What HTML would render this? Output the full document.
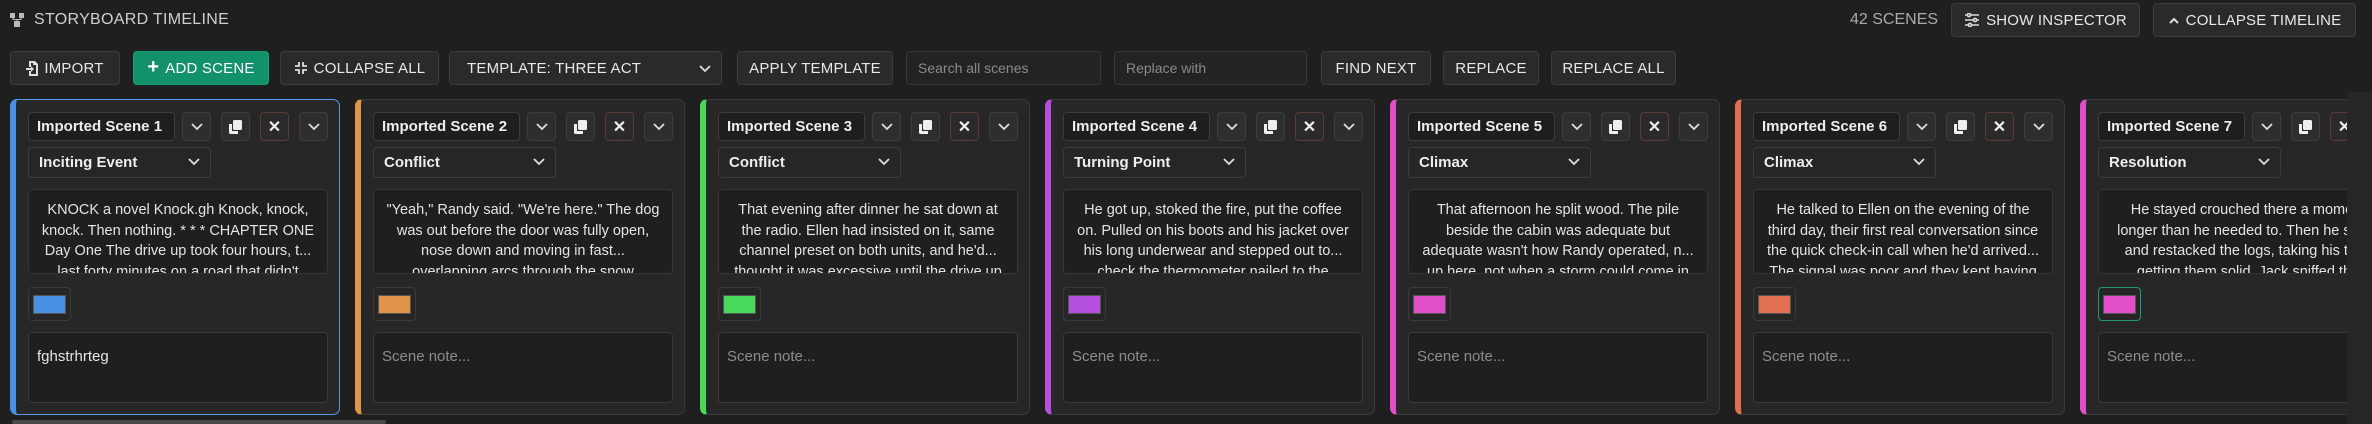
<!DOCTYPE html>
<html><head><meta charset="utf-8"><style>
*{box-sizing:border-box;margin:0;padding:0}
body{width:2372px;height:424px;overflow:hidden;background:#1f1f1f;font-family:"Liberation Sans",sans-serif;color:#e6e6e6;position:relative}
.abs{position:absolute}
.btn{position:absolute;top:51px;height:34px;background:#2a2a2a;border:1px solid #3c3c3c;border-radius:4px;color:#e8e8e8;font-size:15px;display:flex;align-items:center;justify-content:center;gap:6px;letter-spacing:.2px}
.inp{position:absolute;top:51px;height:34px;background:#232323;border:1px solid #383838;border-radius:4px;color:#8a8a8a;font-size:14px;padding-left:11px;display:flex;align-items:center}
.card{position:absolute;top:99px;width:330px;height:316px;background:#272727;border:1px solid #3a3a3a;border-radius:7px;border-left-width:6px;overflow:hidden}
.card > *{position:absolute}
.nm{left:12px;top:12px;width:147px;height:29px;background:#1e1e1e;border:1px solid #3c3c3c;border-radius:4px;font-size:15px;font-weight:bold;padding-left:8px;line-height:27px;color:#eee}
.ib{top:12px;width:29px;height:29px;background:#2e2e2e;border:1px solid #3d3d3d;border-radius:4px;display:flex;align-items:center;justify-content:center}
.ib.x{border-color:#5e3a36;background:#2a2a2a}
.ty{left:12px;top:47px;width:183px;height:31px;background:#262626;border:1px solid #3c3c3c;border-radius:4px;font-size:15px;font-weight:bold;padding-left:10px;line-height:29px;color:#eee}
.ty svg{position:absolute;right:10px;top:10px}
.tx{left:12px;top:89px;width:300px;height:85px;background:#1f1f1f;border:1px solid #363636;border-radius:4px;overflow:hidden;font-size:14.5px;line-height:20.5px;text-align:center;padding-top:10px;color:#e4e4e4}
.tx div{white-space:nowrap}
.sw{left:12px;top:187px;width:43px;height:34px;border:1px solid #3a3a3a;border-radius:4px;background:#262626}
.sw i{position:absolute;left:4px;top:7px;width:33px;height:19px;border:1px solid #555}
.nt{left:12px;top:232px;width:300px;height:71px;background:#1f1f1f;border:1px solid #3a3a3a;border-radius:4px;font-size:15px;padding:15px 0 0 8px;color:#8c8c8c}
</style></head><body>
<svg class="abs" style="left:9px;top:12px" width="16" height="16" viewBox="0 0 16 16" fill="#bbb"><rect x="1" y="1" width="5" height="5"/><rect x="10" y="1" width="5" height="5"/><rect x="5" y="9" width="6" height="6"/><path d="M3.5 6v2h9V6h-1v1h-7V6z"/><rect x="7.5" y="7" width="1" height="2"/></svg>
<div class="abs" style="left:34px;top:11px;font-size:16px;color:#cfcfcf;letter-spacing:.3px">STORYBOARD TIMELINE</div>
<div class="abs" style="left:1850px;top:11px;font-size:16px;color:#aaa">42 SCENES</div>
<div class="btn" style="top:3px;left:1951px;width:189px"><svg width="16" height="14" viewBox="0 0 16 14" stroke="#ddd" stroke-width="1.6" fill="none"><path d="M1 2h14M1 7h14M1 12h14"/><circle cx="5" cy="2" r="1.6" fill="#2a2a2a"/><circle cx="11" cy="7" r="1.6" fill="#2a2a2a"/><circle cx="6" cy="12" r="1.6" fill="#2a2a2a"/></svg>SHOW INSPECTOR</div>
<div class="btn" style="top:3px;left:2153px;width:203px"><svg width="12" height="8" viewBox="0 0 12 8" stroke="#ddd" stroke-width="2" fill="none"><path d="M2 7l4-4 4 4"/></svg>COLLAPSE TIMELINE</div>

<div class="btn" style="left:10px;width:110px"><svg width="12" height="15" viewBox="0 0 12 15" fill="#ddd"><path d="M3 0h6l3 3v12H3v-5h2v3h5V4H7V2H5v4H3z"/><path d="M0 7h5V5l3 3-3 3V9H0z"/></svg>IMPORT</div>
<div class="btn" style="left:133px;width:136px;background:#12916b;border-color:#1aa37a;color:#fff"><span style="font-size:20px;font-weight:bold;margin-top:-2px">+</span>ADD SCENE</div>
<div class="btn" style="left:280px;width:159px"><svg width="14" height="14" viewBox="0 0 14 14" stroke="#ddd" stroke-width="1.8" fill="none"><path d="M5 1v4H1M9 1v4h4M5 13V9H1M9 13V9h4"/></svg>COLLAPSE ALL</div>
<div class="btn" style="left:449px;width:273px;justify-content:flex-start;padding-left:17px">TEMPLATE: THREE ACT<svg style="position:absolute;right:10px;top:13px" width="12" height="8" viewBox="0 0 12 8" stroke="#ddd" stroke-width="1.8" fill="none"><path d="M1 1l5 5 5-5"/></svg></div>
<div class="btn" style="left:737px;width:156px">APPLY TEMPLATE</div>
<div class="inp" style="left:906px;width:195px">Search all scenes</div>
<div class="inp" style="left:1114px;width:193px">Replace with</div>
<div class="btn" style="left:1321px;width:110px">FIND NEXT</div>
<div class="btn" style="left:1443px;width:96px">REPLACE</div>
<div class="btn" style="left:1551px;width:125px">REPLACE ALL</div>

<div class="card" style="left:10px;border-color:#5a9be6;border-left-color:#4a90e2">
<div class="nm">Imported Scene 1</div>
<div class="ib" style="left:166px"><svg width="12" height="8" viewBox="0 0 12 8" stroke="#ddd" stroke-width="1.8" fill="none"><path d="M1 1l5 5 5-5"/></svg></div>
<div class="ib" style="left:205px"><svg width="13" height="14" viewBox="0 0 13 14" fill="#eee"><rect x="4" y="0" width="9" height="10" rx="1.5"/><path d="M0 4h3v7h6v3H1.5A1.5 1.5 0 0 1 0 12.5z"/></svg></div>
<div class="ib x" style="left:244px;color:#eee;font-size:16px;font-weight:bold">✕</div>
<div class="ib" style="left:283px"><svg width="12" height="8" viewBox="0 0 12 8" stroke="#ddd" stroke-width="1.8" fill="none"><path d="M1 1l5 5 5-5"/></svg></div>
<div class="ty">Inciting Event<svg width="12" height="8" viewBox="0 0 12 8" stroke="#ddd" stroke-width="1.8" fill="none"><path d="M1 1l5 5 5-5"/></svg></div>
<div class="tx"><div>KNOCK a novel Knock.gh Knock, knock,</div><div>knock. Then nothing. * * * CHAPTER ONE</div><div>Day One The drive up took four hours, t...</div><div>last forty minutes on a road that didn't</div></div>
<div class="sw"><i style="background:#4a90e2"></i></div>
<div class="nt" style="color:#e6e6e6">fghstrhrteg</div>
</div>

<div class="card" style="left:355px;border-left-color:#e0954a">
<div class="nm">Imported Scene 2</div>
<div class="ib" style="left:166px"><svg width="12" height="8" viewBox="0 0 12 8" stroke="#ddd" stroke-width="1.8" fill="none"><path d="M1 1l5 5 5-5"/></svg></div>
<div class="ib" style="left:205px"><svg width="13" height="14" viewBox="0 0 13 14" fill="#eee"><rect x="4" y="0" width="9" height="10" rx="1.5"/><path d="M0 4h3v7h6v3H1.5A1.5 1.5 0 0 1 0 12.5z"/></svg></div>
<div class="ib x" style="left:244px;color:#eee;font-size:16px;font-weight:bold">✕</div>
<div class="ib" style="left:283px"><svg width="12" height="8" viewBox="0 0 12 8" stroke="#ddd" stroke-width="1.8" fill="none"><path d="M1 1l5 5 5-5"/></svg></div>
<div class="ty">Conflict<svg width="12" height="8" viewBox="0 0 12 8" stroke="#ddd" stroke-width="1.8" fill="none"><path d="M1 1l5 5 5-5"/></svg></div>
<div class="tx"><div>"Yeah," Randy said. "We're here." The dog</div><div>was out before the door was fully open,</div><div>nose down and moving in fast...</div><div>overlapping arcs through the snow</div></div>
<div class="sw"><i style="background:#e0954a"></i></div>
<div class="nt">Scene note...</div>
</div>

<div class="card" style="left:700px;border-left-color:#47d95a">
<div class="nm">Imported Scene 3</div>
<div class="ib" style="left:166px"><svg width="12" height="8" viewBox="0 0 12 8" stroke="#ddd" stroke-width="1.8" fill="none"><path d="M1 1l5 5 5-5"/></svg></div>
<div class="ib" style="left:205px"><svg width="13" height="14" viewBox="0 0 13 14" fill="#eee"><rect x="4" y="0" width="9" height="10" rx="1.5"/><path d="M0 4h3v7h6v3H1.5A1.5 1.5 0 0 1 0 12.5z"/></svg></div>
<div class="ib x" style="left:244px;color:#eee;font-size:16px;font-weight:bold">✕</div>
<div class="ib" style="left:283px"><svg width="12" height="8" viewBox="0 0 12 8" stroke="#ddd" stroke-width="1.8" fill="none"><path d="M1 1l5 5 5-5"/></svg></div>
<div class="ty">Conflict<svg width="12" height="8" viewBox="0 0 12 8" stroke="#ddd" stroke-width="1.8" fill="none"><path d="M1 1l5 5 5-5"/></svg></div>
<div class="tx"><div>That evening after dinner he sat down at</div><div>the radio. Ellen had insisted on it, same</div><div>channel preset on both units, and he'd...</div><div>thought it was excessive until the drive up</div></div>
<div class="sw"><i style="background:#47d95a"></i></div>
<div class="nt">Scene note...</div>
</div>

<div class="card" style="left:1045px;border-left-color:#b44fe0">
<div class="nm">Imported Scene 4</div>
<div class="ib" style="left:166px"><svg width="12" height="8" viewBox="0 0 12 8" stroke="#ddd" stroke-width="1.8" fill="none"><path d="M1 1l5 5 5-5"/></svg></div>
<div class="ib" style="left:205px"><svg width="13" height="14" viewBox="0 0 13 14" fill="#eee"><rect x="4" y="0" width="9" height="10" rx="1.5"/><path d="M0 4h3v7h6v3H1.5A1.5 1.5 0 0 1 0 12.5z"/></svg></div>
<div class="ib x" style="left:244px;color:#eee;font-size:16px;font-weight:bold">✕</div>
<div class="ib" style="left:283px"><svg width="12" height="8" viewBox="0 0 12 8" stroke="#ddd" stroke-width="1.8" fill="none"><path d="M1 1l5 5 5-5"/></svg></div>
<div class="ty">Turning Point<svg width="12" height="8" viewBox="0 0 12 8" stroke="#ddd" stroke-width="1.8" fill="none"><path d="M1 1l5 5 5-5"/></svg></div>
<div class="tx"><div>He got up, stoked the fire, put the coffee</div><div>on. Pulled on his boots and his jacket over</div><div>his long underwear and stepped out to...</div><div>check the thermometer nailed to the</div></div>
<div class="sw"><i style="background:#b44fe0"></i></div>
<div class="nt">Scene note...</div>
</div>

<div class="card" style="left:1390px;border-left-color:#e04fc8">
<div class="nm">Imported Scene 5</div>
<div class="ib" style="left:166px"><svg width="12" height="8" viewBox="0 0 12 8" stroke="#ddd" stroke-width="1.8" fill="none"><path d="M1 1l5 5 5-5"/></svg></div>
<div class="ib" style="left:205px"><svg width="13" height="14" viewBox="0 0 13 14" fill="#eee"><rect x="4" y="0" width="9" height="10" rx="1.5"/><path d="M0 4h3v7h6v3H1.5A1.5 1.5 0 0 1 0 12.5z"/></svg></div>
<div class="ib x" style="left:244px;color:#eee;font-size:16px;font-weight:bold">✕</div>
<div class="ib" style="left:283px"><svg width="12" height="8" viewBox="0 0 12 8" stroke="#ddd" stroke-width="1.8" fill="none"><path d="M1 1l5 5 5-5"/></svg></div>
<div class="ty">Climax<svg width="12" height="8" viewBox="0 0 12 8" stroke="#ddd" stroke-width="1.8" fill="none"><path d="M1 1l5 5 5-5"/></svg></div>
<div class="tx"><div>That afternoon he split wood. The pile</div><div>beside the cabin was adequate but</div><div>adequate wasn't how Randy operated, n...</div><div>up here, not when a storm could come in</div></div>
<div class="sw"><i style="background:#e04fc8"></i></div>
<div class="nt">Scene note...</div>
</div>

<div class="card" style="left:1735px;border-left-color:#e0704f">
<div class="nm">Imported Scene 6</div>
<div class="ib" style="left:166px"><svg width="12" height="8" viewBox="0 0 12 8" stroke="#ddd" stroke-width="1.8" fill="none"><path d="M1 1l5 5 5-5"/></svg></div>
<div class="ib" style="left:205px"><svg width="13" height="14" viewBox="0 0 13 14" fill="#eee"><rect x="4" y="0" width="9" height="10" rx="1.5"/><path d="M0 4h3v7h6v3H1.5A1.5 1.5 0 0 1 0 12.5z"/></svg></div>
<div class="ib x" style="left:244px;color:#eee;font-size:16px;font-weight:bold">✕</div>
<div class="ib" style="left:283px"><svg width="12" height="8" viewBox="0 0 12 8" stroke="#ddd" stroke-width="1.8" fill="none"><path d="M1 1l5 5 5-5"/></svg></div>
<div class="ty">Climax<svg width="12" height="8" viewBox="0 0 12 8" stroke="#ddd" stroke-width="1.8" fill="none"><path d="M1 1l5 5 5-5"/></svg></div>
<div class="tx"><div>He talked to Ellen on the evening of the</div><div>third day, their first real conversation since</div><div>the quick check-in call when he'd arrived...</div><div>The signal was poor and they kept having</div></div>
<div class="sw"><i style="background:#e0704f"></i></div>
<div class="nt">Scene note...</div>
</div>

<div class="card" style="left:2080px;border-left-color:#e04fc8">
<div class="nm">Imported Scene 7</div>
<div class="ib" style="left:166px"><svg width="12" height="8" viewBox="0 0 12 8" stroke="#ddd" stroke-width="1.8" fill="none"><path d="M1 1l5 5 5-5"/></svg></div>
<div class="ib" style="left:205px"><svg width="13" height="14" viewBox="0 0 13 14" fill="#eee"><rect x="4" y="0" width="9" height="10" rx="1.5"/><path d="M0 4h3v7h6v3H1.5A1.5 1.5 0 0 1 0 12.5z"/></svg></div>
<div class="ib x" style="left:244px;color:#eee;font-size:16px;font-weight:bold">✕</div>
<div class="ib" style="left:283px"><svg width="12" height="8" viewBox="0 0 12 8" stroke="#ddd" stroke-width="1.8" fill="none"><path d="M1 1l5 5 5-5"/></svg></div>
<div class="ty">Resolution<svg width="12" height="8" viewBox="0 0 12 8" stroke="#ddd" stroke-width="1.8" fill="none"><path d="M1 1l5 5 5-5"/></svg></div>
<div class="tx"><div>He stayed crouched there a moment</div><div>longer than he needed to. Then he stood</div><div>and restacked the logs, taking his time</div><div>getting them solid. Jack sniffed the</div></div>
<div class="sw" style="border-color:#1a9a7a"><i style="background:#e04fc8"></i></div>
<div class="nt">Scene note...</div>
</div>

<div class="abs" style="left:2347px;top:92px;width:25px;height:332px;background:#262626"></div>
<div class="abs" style="left:12px;top:420px;width:374px;height:4px;background:#4a4a4a;border-radius:2px"></div>
</body></html>
